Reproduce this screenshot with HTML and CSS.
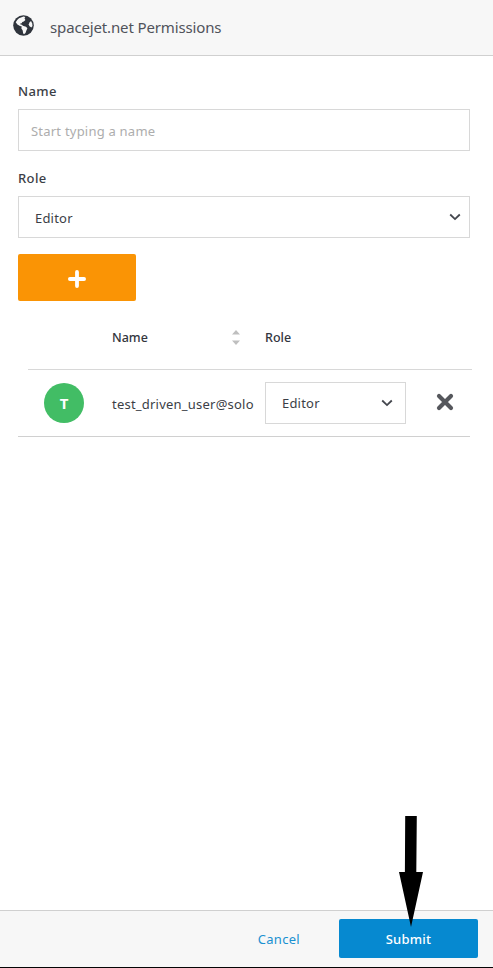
FILE: index.html
```html
<!DOCTYPE html>
<html lang="en">
<head>
<meta charset="utf-8">
<title>spacejet.net Permissions</title>
<link rel="stylesheet" href="styles.css">
</head>
<body>
<div class="panel">
  <header class="header">
    <svg class="globe" viewBox="0 0 21 21" aria-hidden="true">
      <circle cx="10.5" cy="10.5" r="10.3" fill="#2f343c"/>
      <path fill="#f7f7f7" d="M6 3.2 10.5 1.5 12.3 2 11.5 3.3 12.4 5 10.8 6.5 9.3 7 8.7 8.2 7.2 8.5 7.5 9.4 9 9.7 9.8 10.8 13 11.8 14.4 13.2 13.4 15.4 12.5 18 11 19.3 10.1 18.2 9.7 15.5 8.3 13.2 8.8 11.5 7 10.9 4.4 9.4 2.7 7.2 4.2 5Z"/>
      <path fill="#f7f7f7" d="M18 6 19.2 8.5 19.5 11 18.4 12.4 16.5 11.3 15.7 9.6 16.5 7.4Z"/>
    </svg>
    <h1 class="title">spacejet.net Permissions</h1>
  </header>

  <main class="content">
    <label class="label" for="name">Name</label>
    <input class="field" id="name" type="text" placeholder="Start typing a name">
    <div class="label label-role">Role</div>
    <div class="select">
      <span>Editor</span>
      <svg class="chevron" viewBox="0 0 12 8"><path d="M1.2 1.5 6 6.1 10.8 1.5"/></svg>
    </div>
    <button class="add" aria-label="Add">
      <svg class="plus" viewBox="0 0 18 18"><path d="M9 1.9V16.1M1.9 9H16.1"/></svg>
    </button>

    <section class="table">
      <div class="row head">
        <span class="head-name">Name</span>
        <svg class="sort" viewBox="0 0 8 15"><path d="M0 4.5 4 0 8 4.5ZM0 10.5H8L4 15Z"/></svg>
        <span>Role</span>
      </div>
      <div class="row user">
        <span class="avatar">T</span>
        <span class="email">test_driven_user@solo</span>
        <div class="select select-small">
          <span>Editor</span>
          <svg class="chevron" viewBox="0 0 12 8"><path d="M1.2 1.5 6 6.1 10.8 1.5"/></svg>
        </div>
        <svg class="remove" viewBox="0 0 18 18"><path d="M3 3 15 15M15 3 3 15"/></svg>
      </div>
    </section>
  </main>

  <footer class="footer">
    <a class="cancel">Cancel</a>
    <button class="submit">Submit</button>
  </footer>
  <svg class="pointer" viewBox="0 0 24 111"><path d="M6.2 0H17.8L17.3 56H24L12 111 0 56H5.9Z"/></svg>
</div>
</body>
</html>
```
FILE: styles.css
```css
* { box-sizing: border-box; }

body {
  margin: 0;
  background: #fff;
  color: #3b3e46;
  font: 14px/20px "Noto Sans", sans-serif;
}

button, input { font: inherit; }

.panel {
  position: relative;
  display: flex;
  flex-direction: column;
  height: 968px;
  border-bottom: 1px solid #050505;
}

.header {
  display: flex;
  align-items: flex-start;
  height: 56px;
  padding: 15px 13px 0;
  background: #f7f7f7;
  border-bottom: 1px solid #d0d0d0;
}

.globe { width: 21px; height: 21px; margin-right: 16px; }

.title {
  margin: 2px 0 0;
  font-size: 15px;
  line-height: 20px;
  font-weight: 400;
  letter-spacing: -.14px;
  color: #50535b;
}

.content { flex: 1; padding: 25px 23px 0 18px; }

.label { display: block; height: 28px; font-size: 13px; font-weight: 500; letter-spacing: .4px; }
.label-role { margin-top: 17px; }

.field, .select {
  display: flex;
  width: 100%;
  height: 42px;
  border: 1px solid #d8d8d8;
  background: #fff;
}

.field { padding: 1px 12px 0; font-size: 13px; letter-spacing: .22px; outline: 0; }
.field::placeholder { color: #adadad; opacity: 1; }

.select {
  align-items: center;
  justify-content: space-between;
  padding: 1px 8px 0 16px;
  font-size: 13px;
  letter-spacing: .2px;
}

.chevron {
  width: 12px;
  height: 8px;
  fill: none;
  stroke: #44474e;
  stroke-width: 1.8;
}

.select > .chevron { margin-top: -2px; }
.select-small > .chevron { margin-top: 0; }

.add {
  display: flex;
  align-items: center;
  justify-content: center;
  width: 118px;
  height: 47px;
  margin-top: 16px;
  padding: 3px 0 0;
  border: 0;
  border-radius: 2px;
  background: #fa9405;
}

.plus { width: 18px; height: 18px; stroke: #fff; stroke-width: 3.8; stroke-linecap: round; }

.head {
  display: grid;
  grid-template-columns: 120px 33px 1fr;
  align-items: center;
  height: 69px;
  margin: 0 -2px 0 10px;
  padding: 5px 0 0 84px;
  border-bottom: 1px solid #d8d8d8;
  font-size: 12.5px;
  font-weight: 500;
  color: #33363d;
}

.sort { width: 8px; height: 15px; fill: #bfbfbf; }

.user {
  display: grid;
  grid-template-columns: 68px 153px 141px 1fr;
  align-items: center;
  height: 67px;
  padding-left: 26px;
  border-bottom: 1px solid #d0d0d0;
}

.avatar {
  width: 40px;
  height: 40px;
  border-radius: 50%;
  background: #42bd65;
  color: #fff;
  font-size: 15px;
  font-weight: 700;
  line-height: 41px;
  text-align: center;
}

.email { padding-top: 2px; font-size: 13px; letter-spacing: .22px; white-space: nowrap; }
.select-small { padding: 0 12px 0 16px; }
.remove { width: 18px; height: 18px; margin: -2px 0 0 30px; stroke: #55575c; stroke-width: 4.2; stroke-linecap: round; }

.footer {
  display: flex;
  align-items: flex-start;
  justify-content: flex-end;
  height: 57px;
  padding: 8px 15px 0 0;
  background: #f7f7f7;
  border-top: 1px solid #d0d0d0;
}

.cancel { margin: 10px 39px 0 0; font-size: 13px; letter-spacing: .3px; color: #1a91d1; }

.submit {
  width: 139px;
  height: 39px;
  padding: 1px 0 0;
  border: 0;
  border-radius: 2px;
  background: #0689d0;
  color: #fff;
  font-size: 13px;
  font-weight: 500;
  letter-spacing: .25px;
}

.pointer {
  position: absolute;
  left: 399px;
  top: 816px;
  width: 24px;
  height: 111px;
  fill: #000;
}
```
